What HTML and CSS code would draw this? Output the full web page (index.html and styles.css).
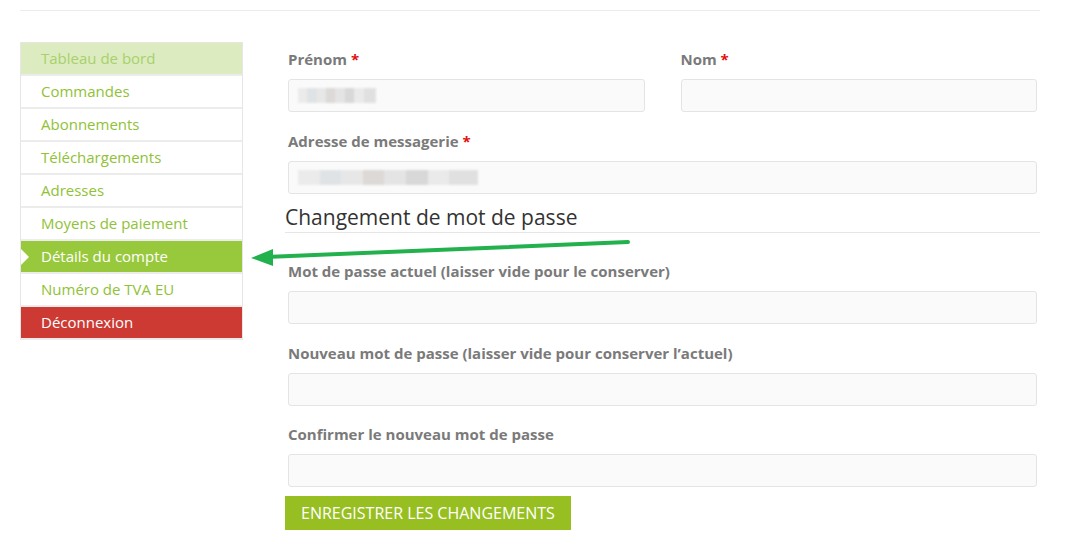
FILE: index.html
```html
<!DOCTYPE html>
<html lang="fr">
<head>
    <meta charset="UTF-8">
    <title>Détails du compte</title>
    <link rel="stylesheet" href="styles.css">
</head>
<body>
    <div class="page">
        <div class="account">
            <ul class="account-nav">
                <li class="nav-item faded"><a href="#">Tableau de bord</a></li>
                <li class="nav-item"><a href="#">Commandes</a></li>
                <li class="nav-item"><a href="#">Abonnements</a></li>
                <li class="nav-item"><a href="#">Téléchargements</a></li>
                <li class="nav-item"><a href="#">Adresses</a></li>
                <li class="nav-item"><a href="#">Moyens de paiement</a></li>
                <li class="nav-item active"><a href="#">Détails du compte</a></li>
                <li class="nav-item"><a href="#">Numéro de TVA EU</a></li>
                <li class="nav-item logout"><a href="#">Déconnexion</a></li>
            </ul>

            <form class="account-form">
                <div class="form-row-pair">
                    <div class="form-row">
                        <label>Prénom <span class="required">*</span></label>
                        <div class="input">
                            <span class="blur blur-short"></span>
                        </div>
                    </div>
                    <div class="form-row">
                        <label>Nom <span class="required">*</span></label>
                        <div class="input"></div>
                    </div>
                </div>

                <div class="form-row">
                    <label>Adresse de messagerie <span class="required">*</span></label>
                    <div class="input">
                        <span class="blur blur-long"></span>
                    </div>
                </div>

                <h3 class="section-title">Changement de mot de passe</h3>

                <div class="form-row">
                    <label>Mot de passe actuel (laisser vide pour le conserver)</label>
                    <div class="input"></div>
                </div>
                <div class="form-row">
                    <label>Nouveau mot de passe (laisser vide pour conserver l’actuel)</label>
                    <div class="input"></div>
                </div>
                <div class="form-row last">
                    <label>Confirmer le nouveau mot de passe</label>
                    <div class="input"></div>
                </div>

                <button type="button" class="save-btn">Enregistrer les changements</button>
            </form>
        </div>

        <!-- annotation arrow drawn over the screenshot -->
        <svg class="annotation" width="1070" height="557" viewBox="0 0 1070 557">
            <line x1="628" y1="242" x2="266" y2="257" stroke="#22b14c" stroke-width="4" stroke-linecap="round"/>
            <polygon points="251,258 273,249 273,266" fill="#22b14c"/>
        </svg>
    </div>
</body>
</html>
```

FILE: styles.css
```css
* {
    margin: 0;
    padding: 0;
    box-sizing: border-box;
}

body {
    font-family: 'Open Sans', 'Noto Sans', sans-serif;
    background: #fff;
    color: #777;
}

.page {
    position: relative;
    width: 1070px;
    height: 557px;
    padding: 10px 30px 0 20px;
}

.account {
    border-top: 1px solid #ececec;
    padding-top: 31px;
    display: flex;
    align-items: flex-start;
    gap: 42px;
}

/* left navigation */
.account-nav {
    list-style: none;
    width: 223px;
    flex-shrink: 0;
    border: 1px solid #e6e6e6;
    border-bottom: none;
}

.nav-item {
    position: relative;
    height: 33px;
    border-bottom: 2px solid #ececec;
}

.nav-item a {
    display: block;
    height: 31px;
    line-height: 31px;
    padding-left: 20px;
    font-size: 15px;
    color: #8fc236;
    text-decoration: none;
}

.nav-item.faded {
    background: #dcecc0;
}

.nav-item.faded a {
    color: #a9d06c;
}

.nav-item.active {
    background: #98c93c;
}

.nav-item.active a {
    color: #fff;
}

.nav-item.active::before {
    content: '';
    position: absolute;
    left: 0;
    top: 8px;
    border-top: 8px solid transparent;
    border-bottom: 8px solid transparent;
    border-left: 8px solid #fff;
}

.nav-item.logout {
    background: #cc3a33;
}

.nav-item.logout a {
    color: #fff;
}

/* form */
.account-form {
    flex: 1;
    padding-top: 7px;
}

.form-row-pair {
    display: flex;
    gap: 30px;
}

.form-row-pair .form-row {
    flex: 1;
}

.form-row {
    padding: 0 3px;
    margin-bottom: 18.5px;
}

.form-row.last {
    margin-bottom: 9px;
}

.form-row label {
    display: block;
    font-size: 15px;
    font-weight: bold;
    line-height: 20px;
    color: #7a7a7a;
    margin-bottom: 10px;
}

.required {
    color: #e01010;
}

.input {
    height: 33px;
    background: #fafafa;
    border: 1px solid #e4e4e4;
    border-radius: 3px;
    display: flex;
    align-items: center;
    padding-left: 9px;
}

/* redacted values */
.blur {
    display: block;
    height: 15px;
    opacity: 0.6;
    background:
        linear-gradient(90deg, #e2e2e2 0 12%, #cfd4d8 12% 24%, #dcdcdc 24% 36%, #c9c4c0 36% 48%, #d6d6d6 48% 60%, #c2c2c2 60% 72%, #e0e0e0 72% 84%, #d0d0d0 84% 100%);
    filter: blur(1px);
}

.blur-short {
    width: 78px;
}

.blur-long {
    width: 180px;
}

.section-title {
    font-size: 21px;
    font-weight: normal;
    line-height: 24px;
    color: #333;
    padding-bottom: 3px;
    border-bottom: 1px solid #e6e6e6;
    margin-top: -7px;
    margin-bottom: 28px;
}

.save-btn {
    border: none;
    background: #97bf22;
    color: #fff;
    font-family: 'Open Sans', sans-serif;
    font-size: 16px;
    text-transform: uppercase;
    height: 34px;
    padding: 0 16px;
}

.annotation {
    position: absolute;
    left: 0;
    top: 0;
    pointer-events: none;
}
```
